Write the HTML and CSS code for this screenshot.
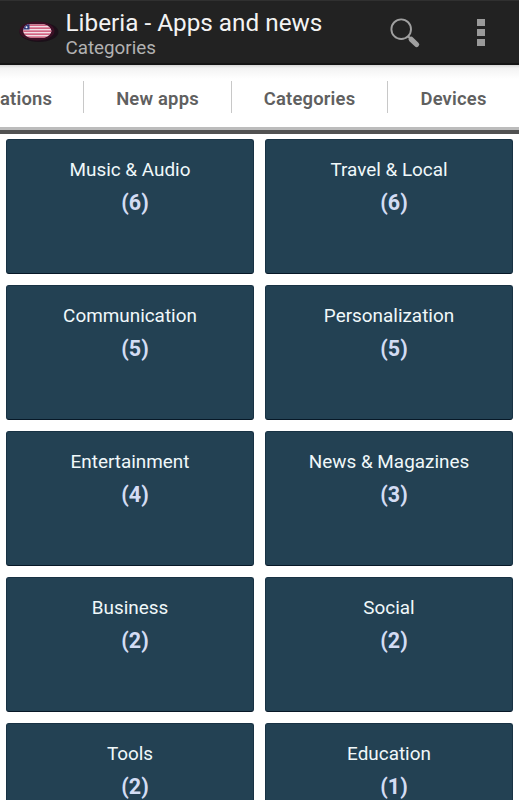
FILE: index.html
```html
<!DOCTYPE html>
<html>
<head>
	<title>Liberia - Apps and news</title>
	<meta charset="utf-8">
	<meta name="viewport" content="width=device-width, initial-scale=1">

	<link rel="stylesheet" href="styles.css">
</head>

<body>

	<div class="page">


		<header class="action-bar">
			<svg class="logo" width="44" height="28" viewBox="0 0 44 28">
				<defs>
					<clipPath id="flag"><path d="M12 7.2h16q6.5 1.5 7.5 6.8-1 5.3-7.5 6.8H15Q8 19.5 7 14q.5-5 5-6.8z"/></clipPath>
				</defs>
				<ellipse cx="23" cy="15" rx="19.5" ry="10" fill="#1b1019"/>
				<ellipse cx="21" cy="14" rx="17.5" ry="9.5" fill="#3b0f25"/>
				<g clip-path="url(#flag)">
					<rect x="5" y="5" width="31" height="18" fill="#f1dfe6"/>
					<path d="M5 8.2h31M5 11.2h31M5 14.2h31M5 17.2h31M5 20.2h31" stroke="#c83b61" stroke-width="1.3"/>
					<rect x="5" y="5" width="8.5" height="7.5" fill="#2c3c7c"/>
					<circle cx="10.5" cy="10.3" r="1" fill="#fff"/>
				</g>
			</svg>
			<div class="titles">
				<h1 class="title">Liberia - Apps and news</h1>
				<div class="subtitle">Categories</div>
			</div>
			<svg class="search" width="32" height="32" viewBox="0 0 32 32">
				<circle cx="12.2" cy="12.2" r="9.8" fill="none" stroke="#a0a0a0" stroke-width="1.9"/>
				<path d="M18.8 19l3 3" stroke="#a0a0a0" stroke-width="2.2"/>
				<path d="M22.2 22.3l5.4 5.2" stroke="#a0a0a0" stroke-width="5.2" stroke-linecap="round"/>
			</svg>
			<div class="overflow">
				<span class="dot"></span>
				<span class="dot"></span>
				<span class="dot"></span>
			</div>
		</header>


		<nav class="tabs">
			<div class="tab tab-first">ations</div>
			<div class="tab tab-new">New apps</div>
			<div class="tab tab-categories">Categories</div>
			<div class="tab tab-devices">Devices</div>
		</nav>


		<main class="grid">
			<div class="tile"><div class="name">Music &amp; Audio</div><div class="count">(6)</div></div>
			<div class="tile"><div class="name">Travel &amp; Local</div><div class="count">(6)</div></div>
			<div class="tile"><div class="name">Communication</div><div class="count">(5)</div></div>
			<div class="tile"><div class="name">Personalization</div><div class="count">(5)</div></div>
			<div class="tile"><div class="name">Entertainment</div><div class="count">(4)</div></div>
			<div class="tile"><div class="name">News &amp; Magazines</div><div class="count">(3)</div></div>
			<div class="tile"><div class="name">Business</div><div class="count">(2)</div></div>
			<div class="tile"><div class="name">Social</div><div class="count">(2)</div></div>
			<div class="tile"><div class="name">Tools</div><div class="count">(2)</div></div>
			<div class="tile"><div class="name">Education</div><div class="count">(1)</div></div>
		</main>


	</div>

</body>
</html>
```
FILE: styles.css
```css
* {
	margin: 0;
	padding: 0;
	box-sizing: border-box;
}

body {
	font-family: Roboto, "Liberation Sans", sans-serif;
	background-color: white;
}

.page {
	height: 100vh;
	overflow: hidden;
}


	.action-bar {
		display: flex;
		height: 65px;
		padding-left: 16px;
		border-top: 1px solid #303030;
		border-bottom: 2px solid #151515;
		background-color: #222222;
	}

		.logo {
			flex: none;
			margin-top: 16px;
		}

		.titles {
			flex: none;
			width: 329px;
			padding: 7px 0px 0px 5.5px;
			white-space: nowrap;
		}

		.title {
			font-size: 24.3px;
			font-weight: 400;
			line-height: 29px;
			color: #f3f3f3;
		}

		.subtitle {
			font-size: 18.8px;
			line-height: 22px;
			color: #b2b2b2;
		}

		.search {
			flex: none;
			margin-top: 16px;
		}

		.overflow {
			display: flex;
			flex-direction: column;
			gap: 3px;
			margin: 18px 0px 0px 56px;
		}

			.dot {
				width: 8px;
				height: 7px;
				background-color: #9a9a9a;
			}


	.tabs {
		display: flex;
		height: 69px;
		padding-top: 16px;
		border-bottom: 4px solid #515151;
		background: linear-gradient(#d6d6d6, #f3f3f3 3px, #ffffff 14px);
		box-shadow: inset 0px -3px 0px #bcbcbc;
	}

		.tab {
			flex: none;
			height: 32px;
			border-right: 1px solid #c8c8c8;
			font-size: 18.4px;
			font-weight: 600;
			letter-spacing: 0.2px;
			line-height: 35px;
			color: #606060;
			white-space: nowrap;
			text-align: center;
		}

		.tab-first {
			width: 84px;
			padding-right: 33px;
			text-align: right;
		}

		.tab-new {
			width: 148px;
		}

		.tab-categories {
			width: 156px;
		}

		.tab-devices {
			width: 131px;
			border-right: none;
		}


	.grid {
		display: grid;
		grid-template-columns: 248px 248px;
		grid-auto-rows: 135px;
		gap: 11px;
		padding: 5px 0px 0px 6px;
	}

		.tile {
			padding-top: 18px;
			border: 1px solid #183244;
			border-bottom-color: #071827;
			border-radius: 3px;
			background-color: #234153;
			text-align: center;
		}

			.name {
				font-size: 18.9px;
				line-height: 24px;
				color: #f0f8fa;
			}

			.count {
				padding: 7px 0px 0px 10px;
				font-size: 21.5px;
				font-weight: 700;
				line-height: 28px;
				color: #d3dcf3;
			}
```
